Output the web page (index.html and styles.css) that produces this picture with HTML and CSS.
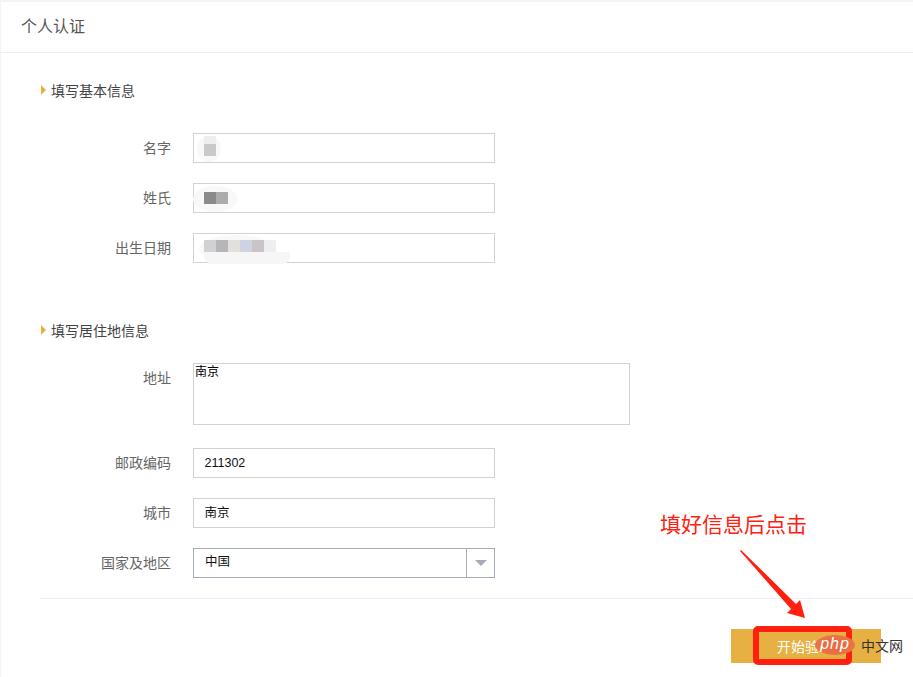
FILE: index.html
```html
<!DOCTYPE html>
<html lang="zh-CN">
<head>
<meta charset="utf-8">
<title>个人认证</title>
<link rel="stylesheet" href="styles.css">
</head>
<body>
<div class="page">
  <header class="head">个人认证</header>
  <main class="main">
    <h2 class="section first"><span class="tri"></span>填写基本信息</h2>
    <div class="rows basic">
      <div class="row"><label class="label">名字</label>
        <div class="field"><span class="blob b1"></span><span class="tile t1a"></span><span class="tile t1b"></span></div></div>
      <div class="row"><label class="label">姓氏</label>
        <div class="field"><span class="blob b2"></span><span class="tile t2a"></span><span class="tile t2b"></span></div></div>
      <div class="row"><label class="label">出生日期</label>
        <div class="field"><span class="blob b3"></span><span class="blob b3low"></span>
          <span class="tile t3a"></span><span class="tile t3b"></span><span class="tile t3c"></span><span class="tile t3d"></span><span class="tile t3e"></span><span class="tile t3f"></span></div></div>
    </div>
    <h2 class="section second"><span class="tri"></span>填写居住地信息</h2>
    <div class="rows address">
      <div class="row"><label class="label">地址</label>
        <div class="area">南京</div></div>
      <div class="row"><label class="label">邮政编码</label>
        <div class="field val">211302</div></div>
      <div class="row"><label class="label">城市</label>
        <div class="field val">南京</div></div>
      <div class="row"><label class="label">国家及地区</label>
        <div class="select"><span class="select-val">中国</span><span class="select-btn"><span class="caret"></span></span></div></div>
    </div>
    <div class="divider"></div>
    <div class="actions"><button class="btn"><span class="btn-text">开始验</span></button></div>
  </main>

  <div class="note">填好信息后点击</div>
  <svg class="arrow" width="913" height="677" viewBox="0 0 913 677"><polygon points="740,551 741,550 796,604 800,600 805,618 787,613 791,609" fill="#ff2010"/></svg>
  <div class="redbox"></div>
  <div class="wm"><span class="wm-logo">php</span><span class="wm-text">中文网</span></div>
</div>
</body>
</html>
```
FILE: styles.css
```css
* { box-sizing: border-box; }
html, body { margin: 0; padding: 0; background: #fff; }
body { font-family: "Liberation Sans", "Noto Sans CJK SC", sans-serif; }
.page {
  position: relative;
  width: 913px;
  height: 677px;
  overflow: hidden;
  border-top: 2px solid #f3f3f3;
  border-left: 1px solid #f3f3f3;
}
.head {
  height: 51px;
  padding-left: 20px;
  border-bottom: 1px solid #eee;
  font-size: 16px;
  line-height: 49px;
  color: #555;
}
.main { padding-left: 39px; }
.section {
  display: flex;
  align-items: center;
  height: 20px;
  margin: 0;
  font-size: 14px;
  font-weight: 400;
  color: #444;
}
.section.first { margin-top: 27px; }
.section.second { margin-top: 57px; }
.tri {
  width: 0;
  height: 0;
  margin: 0 5px 0 1px;
  border-left: 5px solid #e8ad45;
  border-top: 5px solid transparent;
  border-bottom: 5px solid transparent;
}
.rows { display: flex; flex-direction: column; gap: 20px; }
.rows.basic { margin-top: 33px; }
.rows.address { margin-top: 23px; }
.row { display: flex; align-items: flex-start; }
.label {
  width: 131px;
  margin-right: 22px;
  text-align: right;
  font-size: 14px;
  line-height: 30px;
  color: #666;
}
.field {
  position: relative;
  width: 302px;
  height: 30px;
  border: 1px solid #d2d2d2;
  background: #fff;
}
.field.val {
  padding-left: 10.5px;
  font-size: 12.5px;
  line-height: 28px;
  color: #111;
}
.area {
  width: 437px;
  height: 62px;
  border: 1px solid #d2d2d2;
  padding: 1px 0 0 1px;
  font-size: 12px;
  line-height: 15px;
  color: #000;
}
.rows.address .row:first-child + .row { margin-top: 3px; }
.select {
  display: flex;
  width: 302px;
  height: 30px;
  border: 1px solid #a5adba;
}
.select-val {
  flex: 1;
  padding-left: 11px;
  font-size: 12.5px;
  line-height: 26px;
  color: #111;
}
.select-btn {
  display: flex;
  align-items: center;
  justify-content: center;
  width: 28px;
  border-left: 1px solid #a5adba;
}
.caret {
  width: 0;
  height: 0;
  border-top: 6px solid #a5adba;
  border-left: 6px solid transparent;
  border-right: 6px solid transparent;
}
.divider { height: 1px; margin-top: 20px; background: #eee; }
.actions { display: flex; justify-content: flex-end; margin-top: 30px; padding-right: 32px; }
.btn {
  width: 150px;
  height: 34px;
  padding: 0 0 0 46px;
  border: 0;
  background: #e6b042;
  color: #fff;
  text-align: left;
  font: 14px "Liberation Sans", "Noto Sans CJK SC", sans-serif;
}
/* mosaic over the redacted fields */
.blob, .tile { position: absolute; display: block; }
.tile { width: 12px; height: 12px; top: 10px; }
.blob { background: #f8f8f8; border-radius: 50%; }
.b1 { left: 3px; top: 2px; width: 24px; height: 26px; }
.b2 { left: -1px; top: 2px; width: 45px; height: 26px; }
.b3 { left: 5px; top: 1px; width: 76px; height: 28px; }
.b3low { left: 10px; top: 18px; width: 86px; height: 12px; border-radius: 0 0 8px 8px; background: #f6f6f6; }
.tile.t1a { left: 10px; top: 2px; height: 8px; background: #eeeeee; }
.t1b { left: 10px; background: #c9c9c9; }
.t2a { left: 10px; top: 8px; background: #8a8a8a; }
.t2b { left: 22px; top: 8px; background: #acacac; }
.t3a { left: 10px; top: 6px; background: #d2d0d2; }
.t3b { left: 22px; top: 6px; background: #b6b6b8; }
.t3c { left: 34px; top: 6px; background: #e2dfdc; }
.t3d { left: 46px; top: 6px; background: #cfd2e0; }
.t3e { left: 58px; top: 6px; background: #c9c4c8; }
.t3f { left: 70px; top: 6px; background: #eeeef2; }
/* annotations laid over the screenshot */
.note {
  position: absolute;
  left: 659px;
  top: 510px;
  font-size: 21px;
  line-height: 26px;
  color: #ff2010;
  white-space: nowrap;
}
.arrow { position: absolute; left: -1px; top: -2px; pointer-events: none; }
.redbox {
  position: absolute;
  left: 752px;
  top: 624px;
  width: 99px;
  height: 39px;
  border: 6px solid #ff2010;
  border-radius: 5px;
}
.wm {
  position: absolute;
  left: 814px;
  top: 633px;
  display: flex;
  align-items: center;
  height: 20px;
}
.wm-logo {
  width: 40px;
  height: 20px;
  border-radius: 50%;
  background: radial-gradient(ellipse at center, #ea6a3f 35%, #e8764a 70%, #e8a060 100%);
  color: #fff;
  font: italic 16px/18px "Liberation Sans", sans-serif;
  letter-spacing: 1px;
  text-align: center;
}
.wm-text { margin-left: 6px; font-size: 14px; color: #333; }
```
